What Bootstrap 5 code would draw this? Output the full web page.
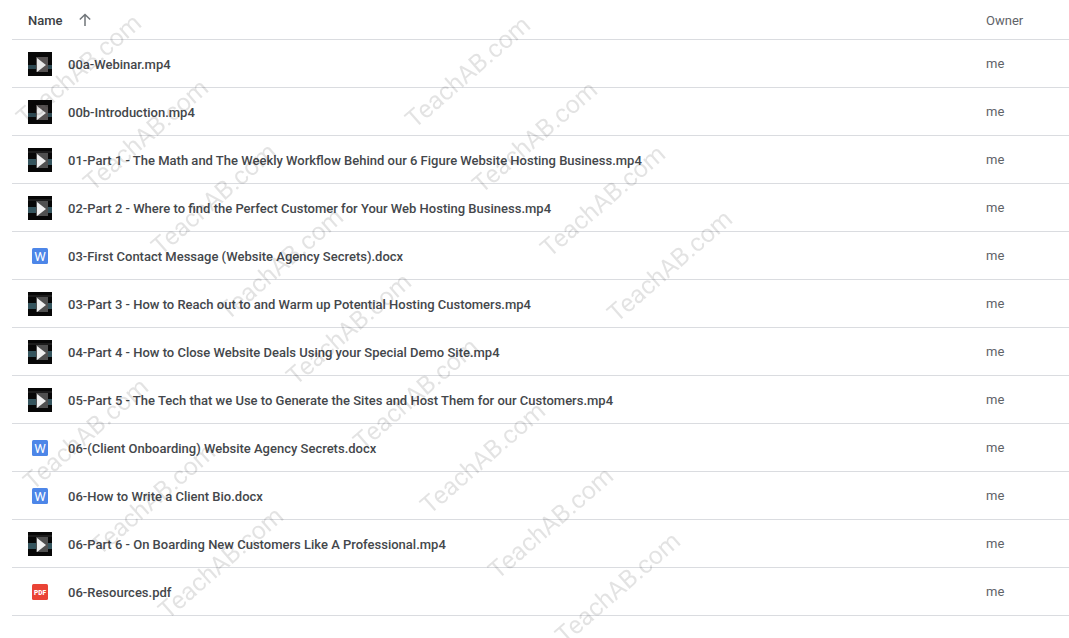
<!DOCTYPE html>
<html lang="en">

<head>
    <meta charset="UTF-8">
    <meta name="viewport" content="width=device-width, initial-scale=1.0">
    <title>Drive files</title>

    <link href="https://cdn.jsdelivr.net/npm/bootstrap@5.3.0/dist/css/bootstrap.min.css" rel="stylesheet">
    <script src="https://cdn.jsdelivr.net/npm/bootstrap@5.3.0/dist/js/bootstrap.bundle.min.js"></script>

    <style>
        html, body { height: 100%; overflow: hidden; }
        body { background: #fff; font-family: Roboto, "Liberation Sans", sans-serif; }
        .file-list { margin-left: 12px; position: relative; }
        .file-row { display: flex; align-items: center; height: 48px; border-bottom: 1px solid #dadce0; padding-left: 16px; }
        .head-row { height: 40px; }
        .head-name { font-size: 13px; font-weight: 500; color: #3c4043; margin: 2px 14px 0 0; }
        .head-owner { font-size: 13px; font-weight: 400; color: #3c4043; margin-top: 2px; }
        .row-name { flex: 1 1 auto; display: flex; align-items: center; min-width: 0; }
        .file-icon { width: 24px; height: 24px; flex: none; margin-right: 16px; display: block; }
        .file-title { font-size: 13px; font-weight: 500; color: #44474b; white-space: nowrap; margin-top: 2px; }
        .row-owner { width: 83px; flex: none; font-size: 13px; color: #5f6368; }
        .marks { position: fixed; inset: 0; pointer-events: none; overflow: hidden; }
        .wm { position: absolute; font-family: Roboto, sans-serif; font-size: 25px; color: #000; opacity: .11; white-space: nowrap; transform: translate(-50%, -50%) rotate(-41deg); }
    </style>
</head>

<body>
    <svg width="0" height="0" class="d-block position-absolute">
        <defs>
            <symbol id="vid" viewBox="0 0 24 24">
                <rect width="24" height="24" fill="#070707" />
                <rect y="3" width="24" height="2" fill="#1c1c1c" />
                <rect y="11" width="24" height="6" fill="#35545d" />
                <rect x="8" y="5" width="12" height="15" fill="#505050" />
                <path d="M9 6 L18 13 L9 20 Z" fill="#f0f0f0" />
            </symbol>
            <symbol id="vid-dark" viewBox="0 0 24 24">
                <rect width="24" height="24" fill="#080808" />
                <rect y="13" width="24" height="4" fill="#2c4750" />
                <rect x="8" y="5" width="12" height="15" fill="#565252" />
                <path d="M9 6 L18 13 L9 20 Z" fill="#e8e8e8" />
            </symbol>
            <symbol id="doc" viewBox="0 0 24 24">
                <rect x="4" y="4" width="16" height="16" rx="1.5" fill="#4d86e8" />
                <text x="12" y="16.8" text-anchor="middle" font-family="Roboto, sans-serif" font-size="13" fill="#fff">W</text>
            </symbol>
            <symbol id="pdf" viewBox="0 0 24 24">
                <rect x="4" y="4" width="16" height="16" rx="1.5" fill="#ea4335" />
                <text x="12" y="14.5" text-anchor="middle" font-family="Roboto, sans-serif" font-size="6.5" font-weight="900" fill="#fff">PDF</text>
            </symbol>
        </defs>
    </svg>

    <div class="file-list" id="list">
        <div class="file-row head-row">
            <div class="row-name">
                <span class="head-name">Name</span>
                <svg width="16" height="16" viewBox="0 0 16 16"><path d="M8 14 V2.5 M2.8 7.5 L8 2.5 L13.2 7.5" fill="none" stroke="#70757a" stroke-width="1.5" /></svg>
            </div>
            <div class="row-owner head-owner">Owner</div>
        </div>
    </div>

    <div class="marks" id="marks"></div>

    <script>
        var files = [
            ["vid-dark", "00a-Webinar.mp4"],
            ["vid-dark", "00b-Introduction.mp4"],
            ["vid", "01-Part 1 - The Math and The Weekly Workflow Behind our 6 Figure Website Hosting Business.mp4"],
            ["vid", "02-Part 2 - Where to find the Perfect Customer for Your Web Hosting Business.mp4"],
            ["doc", "03-First Contact Message (Website Agency Secrets).docx"],
            ["vid", "03-Part 3 - How to Reach out to and Warm up Potential Hosting Customers.mp4"],
            ["vid", "04-Part 4 - How to Close Website Deals Using your Special Demo Site.mp4"],
            ["vid", "05-Part 5 - The Tech that we Use to Generate the Sites and Host Them for our Customers.mp4"],
            ["doc", "06-(Client Onboarding) Website Agency Secrets.docx"],
            ["doc", "06-How to Write a Client Bio.docx"],
            ["vid", "06-Part 6 - On Boarding New Customers Like A Professional.mp4"],
            ["pdf", "06-Resources.pdf"]
        ];
        var list = document.getElementById("list");
        files.forEach(function (f) {
            var row = document.createElement("div");
            row.className = "file-row";
            row.innerHTML = '<div class="row-name"><svg class="file-icon"><use href="#' + f[0] + '"></use></svg><span class="file-title">' + f[1] + '</span></div><div class="row-owner">me</div>';
            list.appendChild(row);
        });

        // watermark runs down the page in three diagonal series
        var marks = document.getElementById("marks");
        [[79, 70, 9], [468, 72, 4], [86, 434, 3]].forEach(function (s) {
            for (var i = 0; i < s[2]; i++) {
                var m = document.createElement("span");
                m.className = "wm";
                m.textContent = "TeachAB.com";
                m.style.left = (s[0] + i * 67.4) + "px";
                m.style.top = (s[1] + i * 64.7) + "px";
                marks.appendChild(m);
            }
        });
    </script>
</body>

</html>
